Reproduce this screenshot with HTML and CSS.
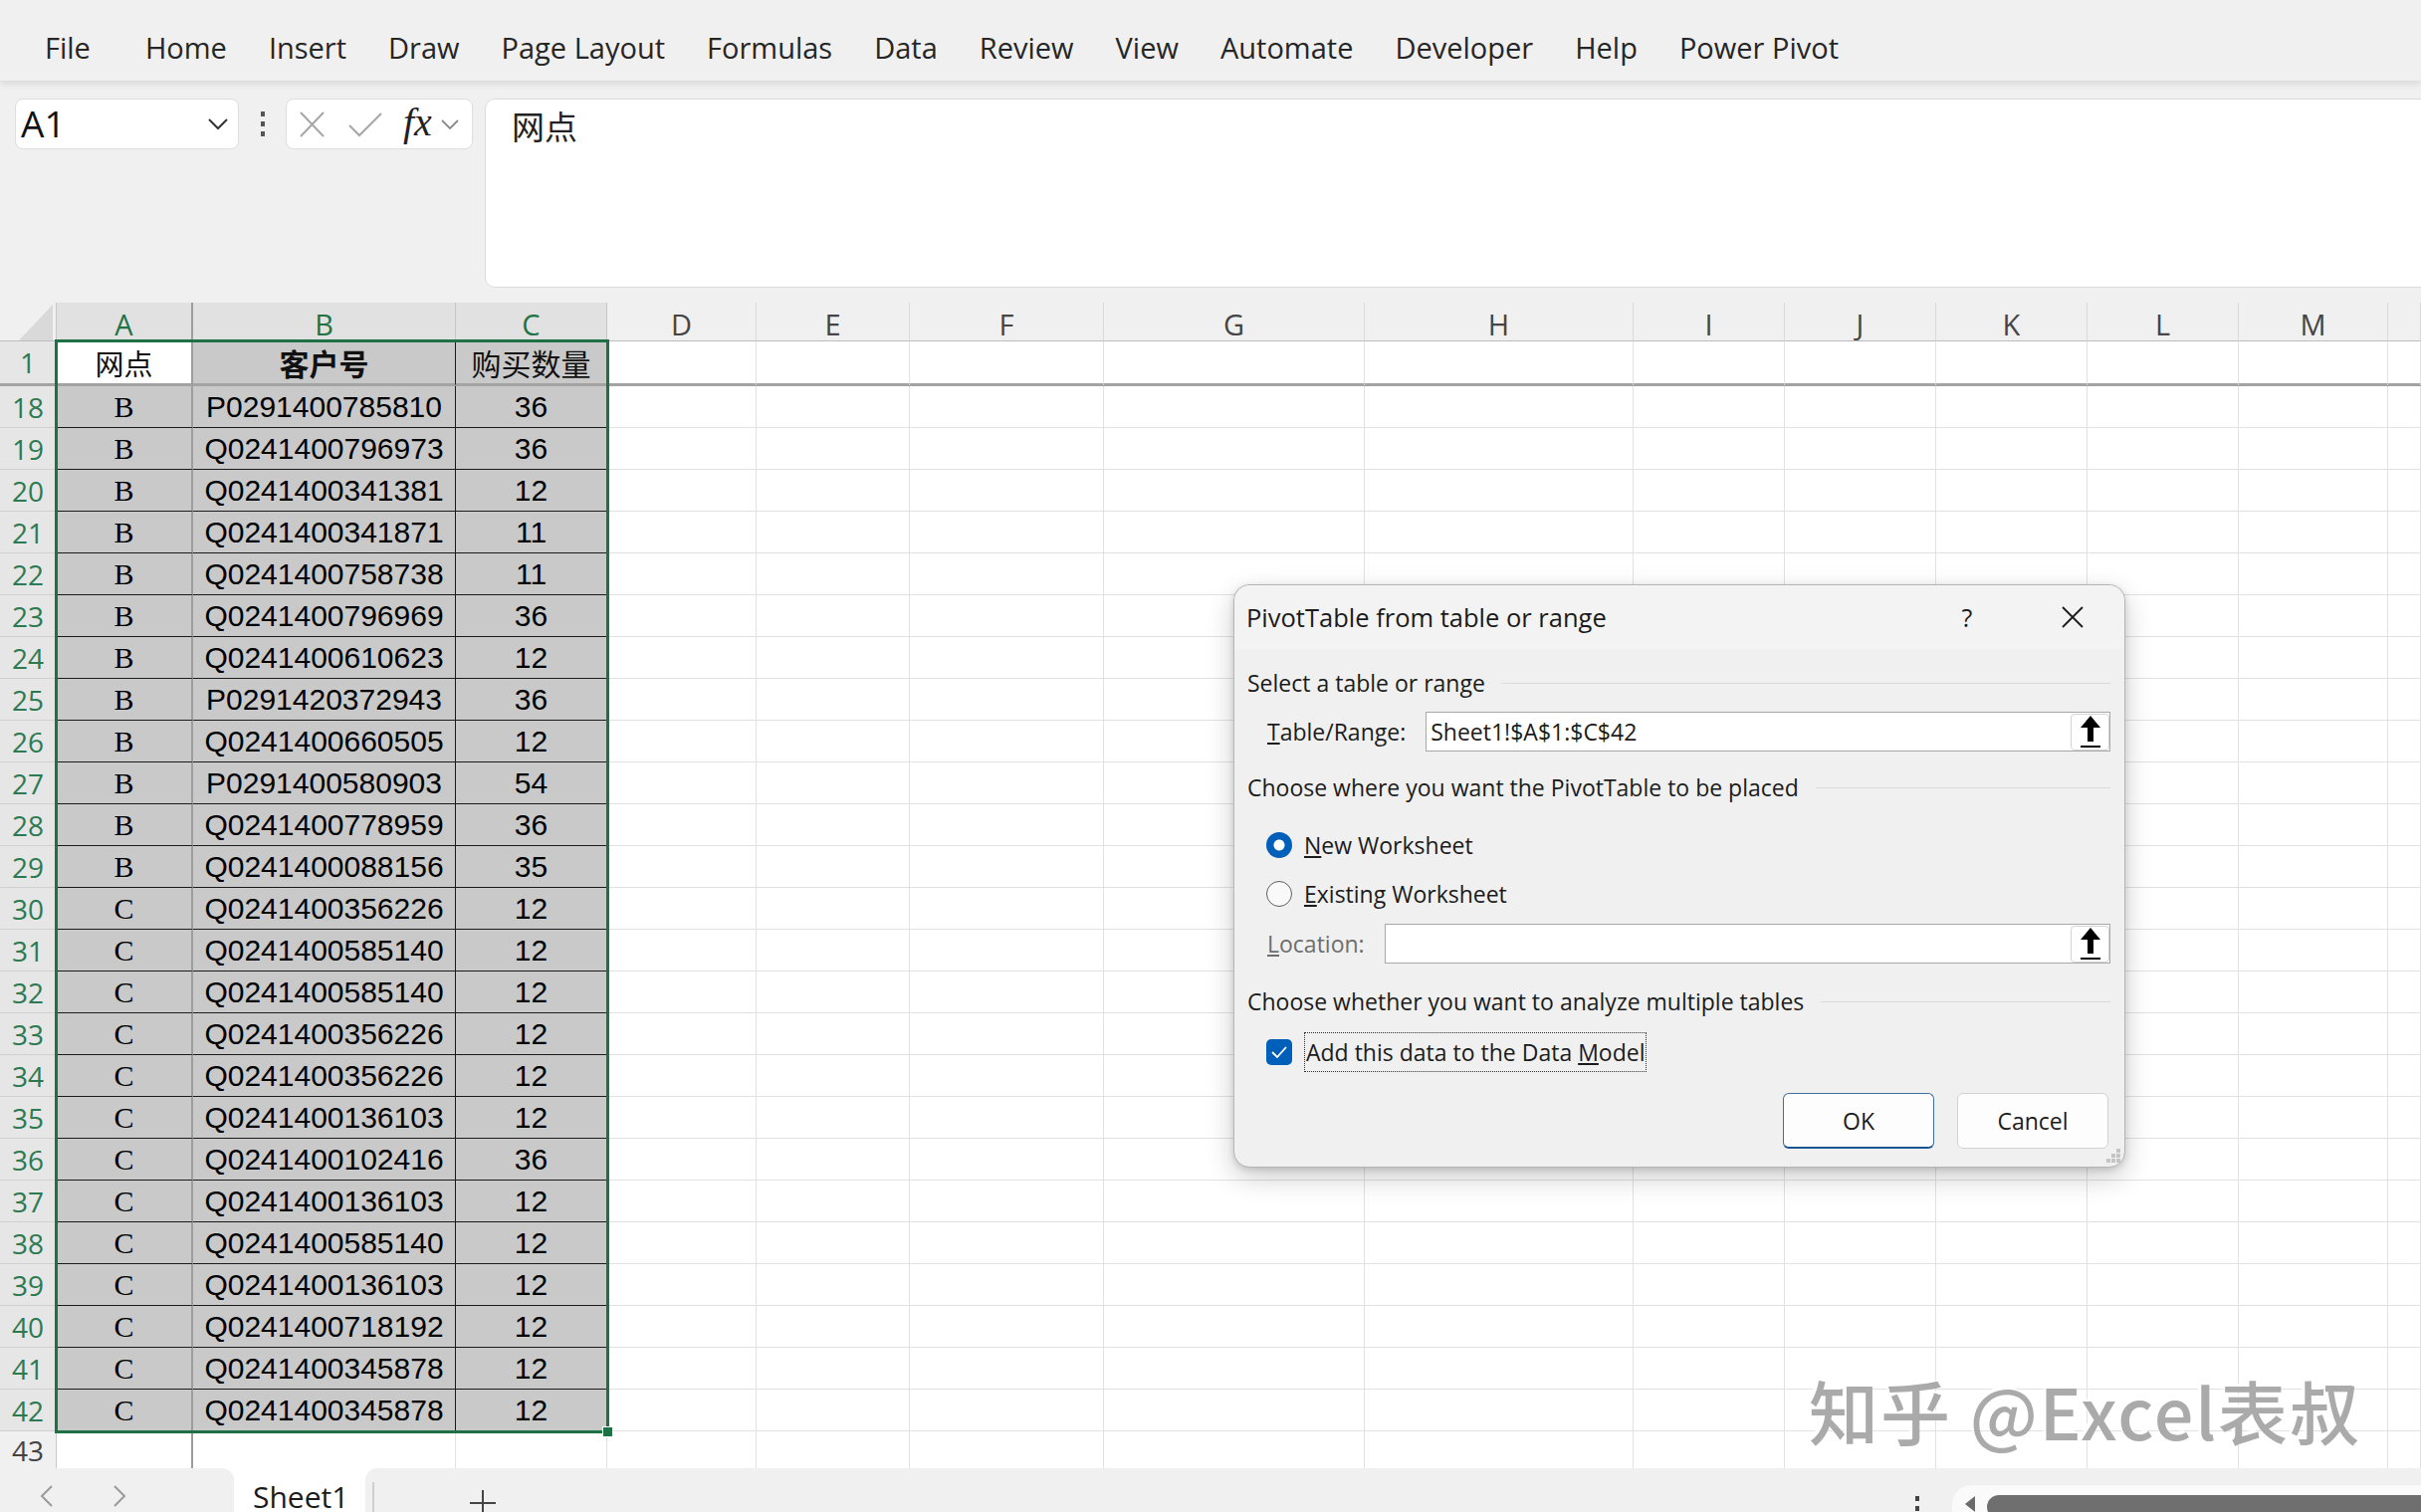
FILE: index.html
```html
<!DOCTYPE html>
<html lang="en">
<head>
<meta charset="utf-8">
<title>Excel - PivotTable</title>
<link rel="stylesheet" href="styles.css">
</head>
<body>
<div class="menubar">
  <span class="mi file">File</span>
  <span class="mi">Home</span>
  <span class="mi">Insert</span>
  <span class="mi">Draw</span>
  <span class="mi">Page Layout</span>
  <span class="mi">Formulas</span>
  <span class="mi">Data</span>
  <span class="mi">Review</span>
  <span class="mi">View</span>
  <span class="mi">Automate</span>
  <span class="mi">Developer</span>
  <span class="mi">Help</span>
  <span class="mi">Power Pivot</span>
</div>

<div class="fbar">
  <div class="namebox">
    <span class="nb-text">A1</span>
    <svg class="nb-chev" width="22" height="14" viewBox="0 0 22 14"><polyline points="2,2 11,11 20,2" fill="none" stroke="#333" stroke-width="2"/></svg>
  </div>
  <div class="vdots"><i></i><i></i><i></i></div>
  <div class="fxbox">
    <svg class="ic-x" width="27" height="26" viewBox="0 0 27 26"><path d="M2 1 L25 25 M25 1 L2 25" stroke="#a6a6a6" stroke-width="2" fill="none"/></svg>
    <svg class="ic-ok" width="36" height="26" viewBox="0 0 36 26"><path d="M2 14 L12 24 L34 2" stroke="#a6a6a6" stroke-width="2" fill="none"/></svg>
    <span class="fx">fx</span>
    <svg class="fx-chev" width="20" height="12" viewBox="0 0 20 12"><polyline points="2,2 10,10 18,2" fill="none" stroke="#8a8a8a" stroke-width="1.8"/></svg>
  </div>
  <div class="finput">网点</div>
</div>

<div class="sheet">
  <div class="r hr">
    <span class="corner"><svg width="34" height="36" viewBox="0 0 34 36"><polygon points="34,0 34,36 0,36" fill="#d9d9d9"/></svg></span>
    <span class="ch s fa">A</span><span class="ch s">B</span><span class="ch s">C</span><span class="ch">D</span><span class="ch">E</span><span class="ch">F</span><span class="ch">G</span><span class="ch">H</span><span class="ch">I</span><span class="ch">J</span><span class="ch">K</span><span class="ch">L</span><span class="ch">M</span><span class="ch"></span>
  </div>
  <div class="r r1"><span class="rh">1</span><span class="ca a1">网点</span><span class="cb hd bold">客户号</span><span class="cc hd">购买数量</span><i></i><i></i><i></i><i></i><i></i><i></i><i></i><i></i><i></i><i></i><i></i></div>
  <div class="r d"><span class="rh">18</span><span class="ca">B</span><span class="cb">P0291400785810</span><span class="cc">36</span><i></i><i></i><i></i><i></i><i></i><i></i><i></i><i></i><i></i><i></i><i></i></div>
  <div class="r d"><span class="rh">19</span><span class="ca">B</span><span class="cb">Q0241400796973</span><span class="cc">36</span><i></i><i></i><i></i><i></i><i></i><i></i><i></i><i></i><i></i><i></i><i></i></div>
  <div class="r d"><span class="rh">20</span><span class="ca">B</span><span class="cb">Q0241400341381</span><span class="cc">12</span><i></i><i></i><i></i><i></i><i></i><i></i><i></i><i></i><i></i><i></i><i></i></div>
  <div class="r d"><span class="rh">21</span><span class="ca">B</span><span class="cb">Q0241400341871</span><span class="cc">11</span><i></i><i></i><i></i><i></i><i></i><i></i><i></i><i></i><i></i><i></i><i></i></div>
  <div class="r d"><span class="rh">22</span><span class="ca">B</span><span class="cb">Q0241400758738</span><span class="cc">11</span><i></i><i></i><i></i><i></i><i></i><i></i><i></i><i></i><i></i><i></i><i></i></div>
  <div class="r d"><span class="rh">23</span><span class="ca">B</span><span class="cb">Q0241400796969</span><span class="cc">36</span><i></i><i></i><i></i><i></i><i></i><i></i><i></i><i></i><i></i><i></i><i></i></div>
  <div class="r d"><span class="rh">24</span><span class="ca">B</span><span class="cb">Q0241400610623</span><span class="cc">12</span><i></i><i></i><i></i><i></i><i></i><i></i><i></i><i></i><i></i><i></i><i></i></div>
  <div class="r d"><span class="rh">25</span><span class="ca">B</span><span class="cb">P0291420372943</span><span class="cc">36</span><i></i><i></i><i></i><i></i><i></i><i></i><i></i><i></i><i></i><i></i><i></i></div>
  <div class="r d"><span class="rh">26</span><span class="ca">B</span><span class="cb">Q0241400660505</span><span class="cc">12</span><i></i><i></i><i></i><i></i><i></i><i></i><i></i><i></i><i></i><i></i><i></i></div>
  <div class="r d"><span class="rh">27</span><span class="ca">B</span><span class="cb">P0291400580903</span><span class="cc">54</span><i></i><i></i><i></i><i></i><i></i><i></i><i></i><i></i><i></i><i></i><i></i></div>
  <div class="r d"><span class="rh">28</span><span class="ca">B</span><span class="cb">Q0241400778959</span><span class="cc">36</span><i></i><i></i><i></i><i></i><i></i><i></i><i></i><i></i><i></i><i></i><i></i></div>
  <div class="r d"><span class="rh">29</span><span class="ca">B</span><span class="cb">Q0241400088156</span><span class="cc">35</span><i></i><i></i><i></i><i></i><i></i><i></i><i></i><i></i><i></i><i></i><i></i></div>
  <div class="r d"><span class="rh">30</span><span class="ca">C</span><span class="cb">Q0241400356226</span><span class="cc">12</span><i></i><i></i><i></i><i></i><i></i><i></i><i></i><i></i><i></i><i></i><i></i></div>
  <div class="r d"><span class="rh">31</span><span class="ca">C</span><span class="cb">Q0241400585140</span><span class="cc">12</span><i></i><i></i><i></i><i></i><i></i><i></i><i></i><i></i><i></i><i></i><i></i></div>
  <div class="r d"><span class="rh">32</span><span class="ca">C</span><span class="cb">Q0241400585140</span><span class="cc">12</span><i></i><i></i><i></i><i></i><i></i><i></i><i></i><i></i><i></i><i></i><i></i></div>
  <div class="r d"><span class="rh">33</span><span class="ca">C</span><span class="cb">Q0241400356226</span><span class="cc">12</span><i></i><i></i><i></i><i></i><i></i><i></i><i></i><i></i><i></i><i></i><i></i></div>
  <div class="r d"><span class="rh">34</span><span class="ca">C</span><span class="cb">Q0241400356226</span><span class="cc">12</span><i></i><i></i><i></i><i></i><i></i><i></i><i></i><i></i><i></i><i></i><i></i></div>
  <div class="r d"><span class="rh">35</span><span class="ca">C</span><span class="cb">Q0241400136103</span><span class="cc">12</span><i></i><i></i><i></i><i></i><i></i><i></i><i></i><i></i><i></i><i></i><i></i></div>
  <div class="r d"><span class="rh">36</span><span class="ca">C</span><span class="cb">Q0241400102416</span><span class="cc">36</span><i></i><i></i><i></i><i></i><i></i><i></i><i></i><i></i><i></i><i></i><i></i></div>
  <div class="r d"><span class="rh">37</span><span class="ca">C</span><span class="cb">Q0241400136103</span><span class="cc">12</span><i></i><i></i><i></i><i></i><i></i><i></i><i></i><i></i><i></i><i></i><i></i></div>
  <div class="r d"><span class="rh">38</span><span class="ca">C</span><span class="cb">Q0241400585140</span><span class="cc">12</span><i></i><i></i><i></i><i></i><i></i><i></i><i></i><i></i><i></i><i></i><i></i></div>
  <div class="r d"><span class="rh">39</span><span class="ca">C</span><span class="cb">Q0241400136103</span><span class="cc">12</span><i></i><i></i><i></i><i></i><i></i><i></i><i></i><i></i><i></i><i></i><i></i></div>
  <div class="r d"><span class="rh">40</span><span class="ca">C</span><span class="cb">Q0241400718192</span><span class="cc">12</span><i></i><i></i><i></i><i></i><i></i><i></i><i></i><i></i><i></i><i></i><i></i></div>
  <div class="r d"><span class="rh">41</span><span class="ca">C</span><span class="cb">Q0241400345878</span><span class="cc">12</span><i></i><i></i><i></i><i></i><i></i><i></i><i></i><i></i><i></i><i></i><i></i></div>
  <div class="r d last"><span class="rh">42</span><span class="ca">C</span><span class="cb">Q0241400345878</span><span class="cc">12</span><i></i><i></i><i></i><i></i><i></i><i></i><i></i><i></i><i></i><i></i><i></i></div>
  <div class="r r43"><span class="rh plain">43</span><i class="fa"></i><i></i><i></i><i></i><i></i><i></i><i></i><i></i><i></i><i></i><i></i><i></i><i></i><i></i></div>

  <div class="sel"><i class="handle"></i></div>
  <div class="wm">知乎 @Excel表叔</div>
</div>

<div class="tabs">
  <div class="nav">
    <svg class="nav-l" width="14" height="24" viewBox="0 0 14 24"><polyline points="12,2 2,12 12,22" fill="none" stroke="#9a9a9a" stroke-width="2"/></svg>
    <svg class="nav-r" width="14" height="24" viewBox="0 0 14 24"><polyline points="2,2 12,12 2,22" fill="none" stroke="#9a9a9a" stroke-width="2"/></svg>
  </div>
  <div class="tab">Sheet1</div>
  <div class="rest">
    <span class="tsep"></span>
    <svg class="plus" width="30" height="30" viewBox="0 0 30 30"><path d="M15 2 V28 M2 15 H28" stroke="#444" stroke-width="2"/></svg>
    <span class="rdots"><i></i><i></i></span>
    <div class="hscroll">
      <svg class="hs-arrow" width="12" height="18" viewBox="0 0 12 18"><polygon points="11,1 11,17 1,9" fill="#6b6b6b"/></svg>
      <span class="thumb"></span>
    </div>
  </div>
</div>

<div class="dlg">
  <div class="dlg-title">
    <span class="ttl">PivotTable from table or range</span>
    <span class="help">?</span>
    <span class="close"><svg width="24" height="24" viewBox="0 0 24 24"><path d="M2 2 L22 22 M22 2 L2 22" stroke="#1b1b1b" stroke-width="1.8" fill="none"/></svg></span>
  </div>
  <div class="dlg-body">
    <div class="sec m12">Select a table or range</div>
    <div class="field m7">
      <label><u>T</u>able/Range:</label>
      <div class="inp"><span class="val">Sheet1!$A$1:$C$42</span><span class="pick"><svg width="22" height="34" viewBox="0 0 22 34"><path d="M11 1 L21 13 L14 13 L14 27 L8 27 L8 13 L1 13 Z" fill="#000"/><rect x="1" y="31" width="20" height="2" fill="#000"/></svg></span></div>
    </div>
    <div class="sec m14">Choose where you want the PivotTable to be placed</div>
    <div class="opt m16"><span class="radio on"></span><span class="lbl"><u>N</u>ew Worksheet</span></div>
    <div class="opt m9"><span class="radio"></span><span class="lbl"><u>E</u>xisting Worksheet</span></div>
    <div class="field m10 dis">
      <label><u>L</u>ocation:</label>
      <div class="inp"><span class="val"></span><span class="pick"><svg width="22" height="34" viewBox="0 0 22 34"><path d="M11 1 L21 13 L14 13 L14 27 L8 27 L8 13 L1 13 Z" fill="#000"/><rect x="1" y="31" width="20" height="2" fill="#000"/></svg></span></div>
    </div>
    <div class="sec m16">Choose whether you want to analyze multiple tables</div>
    <div class="opt m9"><span class="check"><svg width="18" height="14" viewBox="0 0 18 14"><polyline points="2,7 7,12 16,2" fill="none" stroke="#fff" stroke-width="1.8"/></svg></span><span class="focus"><span class="lbl">Add this data to the Data <u>M</u>odel</span></span></div>
    <div class="btns">
      <span class="btn ok">OK</span>
      <span class="btn">Cancel</span>
    </div>
  </div>
  <svg class="grip" width="16" height="16" viewBox="0 0 16 16"><g fill="#c4c4c4"><rect x="11" y="1" width="4" height="4"/><rect x="6" y="6" width="4" height="4"/><rect x="11" y="6" width="4" height="4"/><rect x="1" y="11" width="4" height="4"/><rect x="6" y="11" width="4" height="4"/><rect x="11" y="11" width="4" height="4"/></g></svg>
</div>
</body>
</html>
```

FILE: styles.css
```css
html, body {
  margin: 0;
  padding: 0;
}
body {
  width: 2432px;
  height: 1519px;
  overflow: hidden;
  position: relative;
  background: #ffffff;
  font-family: "Open Sans", "Noto Sans", sans-serif;
  color: #1b1b1b;
}

/* ---------- menu bar ---------- */
.menubar {
  height: 81px;
  box-sizing: border-box;
  background: #f0f0f0;
  display: flex;
  align-items: center;
  padding: 14px 0 0 45px;
  gap: 42px;
  font-size: 29px;
  color: #262626;
  position: relative;
  z-index: 2;
  box-shadow: 0 3px 7px rgba(0, 0, 0, 0.10);
  white-space: nowrap;
}
.mi.file { margin-right: 13px; }

/* ---------- formula bar ---------- */
.fbar {
  height: 223px;
  box-sizing: border-box;
  background: #f0f0f0;
  display: flex;
  align-items: flex-start;
  padding: 18px 0 0 15px;
}
.namebox {
  width: 225px;
  height: 51px;
  box-sizing: border-box;
  background: #fff;
  border: 1px solid #dedede;
  border-radius: 8px;
  display: flex;
  align-items: center;
  padding: 0 9px 0 5px;
}
.nb-text {
  flex: 1;
  font-size: 37px;
  line-height: 1;
  color: #111;
  padding-bottom: 2px;
}
.vdots {
  width: 47px;
  height: 51px;
  display: flex;
  flex-direction: column;
  align-items: center;
  justify-content: center;
  gap: 5px;
}
.vdots i {
  width: 4px;
  height: 5px;
  background: #555;
}
.fxbox {
  width: 188px;
  height: 51px;
  box-sizing: border-box;
  background: #fff;
  border: 1px solid #dedede;
  border-radius: 8px;
  display: flex;
  align-items: center;
  padding-left: 12px;
}
.ic-x { margin-right: 22px; }
.ic-ok { margin-right: 20px; }
.fx {
  font-family: "Liberation Serif", "DejaVu Serif", serif;
  font-style: italic;
  font-size: 40px;
  color: #222;
  line-height: 1;
  margin-right: 8px;
  padding-bottom: 4px;
}
.finput {
  flex: 1;
  height: 190px;
  margin-left: 12px;
  margin-right: -20px;
  box-sizing: border-box;
  background: #fff;
  border: 1px solid #dcdcdc;
  border-radius: 10px;
  padding: 5px 0 0 26px;
  font-family: "Noto Sans CJK SC", sans-serif;
  font-size: 33px;
  line-height: 42px;
  color: #222;
}

/* ---------- sheet ---------- */
.sheet {
  position: relative;
  height: 1171px;
}
.r {
  display: grid;
  grid-template-columns: 57px 137px 264px 152px 150px 154px 195px 262px 270px 152px 152px 152px 152px 150px 33px;
  height: 42px;
}
.r > * {
  box-sizing: border-box;
  border-right: 1px solid #e1e1e1;
  border-bottom: 1px solid #e1e1e1;
  display: flex;
  align-items: center;
  justify-content: center;
  overflow: hidden;
  white-space: nowrap;
  font-style: normal;
}
.r > .fa,
.r > .ca {
  border-right: 2px solid #9d9d9d;
}

/* header row */
.hr { height: 39px; }
.hr > * {
  background: #f0f0f0;
  border-right-color: #dadada;
  border-bottom: 1px solid #bdbdbd;
  font-size: 29px;
  line-height: 30px;
  color: #454545;
  padding-top: 5px;
}
.hr > .corner {
  justify-content: flex-end;
  align-items: flex-end;
  padding: 0 3px 0 0;
  border-right: 1px solid #c8c8c8;
}
.hr > .corner svg { display: block; }
.hr > .ch.s {
  background: #e1e1e1;
  color: #217346;
  border-right-color: #c6c6c6;
}
.hr > .ch.s.fa { border-right: 2px solid #9d9d9d; }

/* row headers */
.r > .rh {
  background: #e6e6e6;
  color: #2d7a51;
  font-size: 28px;
  border-right: 1px solid #c8c8c8;
  border-bottom-color: #d0d0d0;
  justify-content: center;
}
.r > .rh.plain {
  background: #f0f0f0;
  color: #444;
}

/* row 1 */
.r1 { height: 45px; }
.r1 > * { border-bottom: 3px solid #a3a3a3; }
.r1 > .rh { border-bottom: 3px solid #a3a3a3; }
.r1 > .hd {
  background: #c9c9c9;
  font-family: "Noto Sans CJK SC", sans-serif;
  font-size: 30px;
  color: #111;
}
.r1 > .cb { border-right: 1px solid #1a1a1a; }
.r1 > .a1 {
  background: #fff;
  font-family: "Noto Sans CJK SC", sans-serif;
  font-size: 29px;
  color: #111;
}
.bold { font-weight: 700; }

/* data rows */
.d > .ca,
.d > .cb,
.d > .cc {
  background: #c9c9c9;
  border-bottom: 1px solid #1a1a1a;
  color: #000;
}
.d > .ca {
  font-family: "Liberation Serif", "Times New Roman", serif;
  font-size: 30px;
}
.d > .cb {
  font-family: "Liberation Sans", Arial, sans-serif;
  font-size: 30px;
  border-right: 1px solid #1a1a1a;
}
.d > .cc {
  font-family: "Liberation Sans", Arial, sans-serif;
  font-size: 30px;
}
.r43 { height: 37px; }
.r43 > * { border-bottom: none; }

/* selection overlay */
.sel {
  position: absolute;
  left: 55px;
  top: 37px;
  width: 557px;
  height: 1099px;
  box-sizing: border-box;
  border: 3px solid #1e7145;
  pointer-events: none;
}
.sel .handle {
  position: absolute;
  right: -7px;
  bottom: -7px;
  width: 9px;
  height: 9px;
  background: #1e7145;
  border: 1px solid #fff;
}

/* watermark */
.wm {
  position: absolute;
  left: 1817px;
  top: 1078px;
  font-family: "Noto Sans CJK SC", sans-serif;
  font-size: 70px;
  font-weight: 500;
  color: #aaaaaa;
  letter-spacing: 2px;
  text-shadow: -3px -3px 0 rgba(255, 255, 255, 0.85);
  white-space: nowrap;
  line-height: 1;
}

/* ---------- sheet tabs ---------- */
.tabs {
  height: 44px;
  display: flex;
  background: #ffffff;
  overflow: hidden;
}
.nav {
  width: 235px;
  background: #f0f0f0;
  border-top-right-radius: 12px;
  position: relative;
}
.nav svg { position: absolute; top: 16px; }
.nav-l { left: 40px; }
.nav-r { left: 113px; }
.tab {
  width: 132px;
  box-sizing: border-box;
  padding: 9px 0 0 19px;
  font-size: 30px;
  line-height: 40px;
  color: #1b1b1b;
}
.rest {
  flex: 1;
  background: #f0f0f0;
  border-top-left-radius: 12px;
  display: flex;
  align-items: flex-start;
  position: relative;
}
.tsep {
  width: 2px;
  height: 30px;
  margin: 14px 0 0 7px;
  background: #cfcfcf;
}
.plus {
  margin: 20px 0 0 94px;
}
.rdots {
  display: flex;
  flex-direction: column;
  gap: 5px;
  margin: 28px 0 0 1424px;
}
.rdots i {
  width: 4px;
  height: 5px;
  background: #444;
}
.hscroll {
  flex: 1;
  margin: 17px 0 0 33px;
  height: 40px;
  background: #fafafa;
  border-top-left-radius: 20px;
  display: flex;
  align-items: flex-start;
  padding: 10px 0 0 12px;
  box-sizing: border-box;
}
.hs-arrow { margin-right: 11px; }
.thumb {
  flex: 1;
  height: 24px;
  background: #6f6f6f;
  border-radius: 12px 0 0 12px;
}

/* ---------- dialog ---------- */
.dlg {
  position: absolute;
  left: 1239px;
  top: 587px;
  width: 896px;
  height: 586px;
  box-sizing: border-box;
  background: #f0f0f0;
  border: 1px solid #b5b5b5;
  border-radius: 16px;
  box-shadow: 0 10px 28px rgba(0, 0, 0, 0.20), 0 2px 6px rgba(0, 0, 0, 0.14);
  font-size: 23px;
  color: #1b1b1b;
}
.dlg-title {
  height: 64px;
  display: flex;
  align-items: center;
  padding: 0 30px 0 12px;
  background: #f3f3f3;
  border-radius: 16px 16px 0 0;
}
.ttl {
  flex: 1;
  font-size: 25.5px;
}
.help {
  width: 24px;
  text-align: center;
  font-size: 25px;
}
.close {
  width: 44px;
  margin-left: 72px;
  display: flex;
  justify-content: center;
}
.close svg { display: block; }
.dlg-body {
  padding: 0 14px 0 13px;
  display: flex;
  flex-direction: column;
}
.m7 { margin-top: 7px; }
.m9 { margin-top: 9px; }
.m10 { margin-top: 10px; }
.m12 { margin-top: 12px; }
.m14 { margin-top: 14px; }
.m16 { margin-top: 16px; }
.sec {
  height: 44px;
  display: flex;
  align-items: center;
  white-space: nowrap;
}
.sec::after {
  content: "";
  flex: 1;
  height: 1px;
  background: #d9d9d9;
  margin-left: 17px;
}
.field {
  height: 40px;
  display: flex;
  align-items: center;
  padding-left: 20px;
  gap: 20px;
}
.field label { white-space: nowrap; }
.field.dis label { color: #6d6d6d; }
.inp {
  flex: 1;
  height: 40px;
  box-sizing: border-box;
  background: #fff;
  border: 1px solid #a8a8a8;
  display: flex;
  align-items: center;
  padding-left: 4px;
}
.val { flex: 1; white-space: nowrap; }
.pick {
  width: 39px;
  height: 37px;
  box-sizing: border-box;
  background: #fff;
  border: 1px solid #d3d3d3;
  border-radius: 4px;
  display: flex;
  align-items: center;
  justify-content: center;
}
.pick svg { display: block; }
.opt {
  height: 40px;
  display: flex;
  align-items: center;
  padding-left: 19px;
  gap: 12px;
}
.lbl { white-space: nowrap; }
.radio {
  width: 26px;
  height: 26px;
  box-sizing: border-box;
  border-radius: 50%;
  border: 1.5px solid #5f5f5f;
  background: #f9f9f9;
}
.radio.on {
  border: none;
  background: radial-gradient(circle, #ffffff 0 5px, #005fb8 6px);
}
.check {
  width: 26px;
  height: 26px;
  border-radius: 5px;
  background: #005fb8;
  display: flex;
  align-items: center;
  justify-content: center;
}
.check svg { display: block; }
.focus {
  height: 40px;
  box-sizing: border-box;
  border: 1px dotted #333;
  display: flex;
  align-items: center;
  padding: 0 1px;
}
.btns {
  margin-top: 21px;
  display: flex;
  justify-content: flex-end;
  gap: 23px;
  padding-right: 2px;
}
.btn {
  width: 152px;
  height: 56px;
  box-sizing: border-box;
  background: #fdfdfd;
  border: 1px solid #d2d2d2;
  border-radius: 6px;
  display: flex;
  align-items: center;
  justify-content: center;
}
.btn.ok {
  border: 1px solid #3f6f9f;
  border-bottom: 2px solid #1a5590;
}
.grip {
  position: absolute;
  right: 3px;
  bottom: 3px;
}
```
